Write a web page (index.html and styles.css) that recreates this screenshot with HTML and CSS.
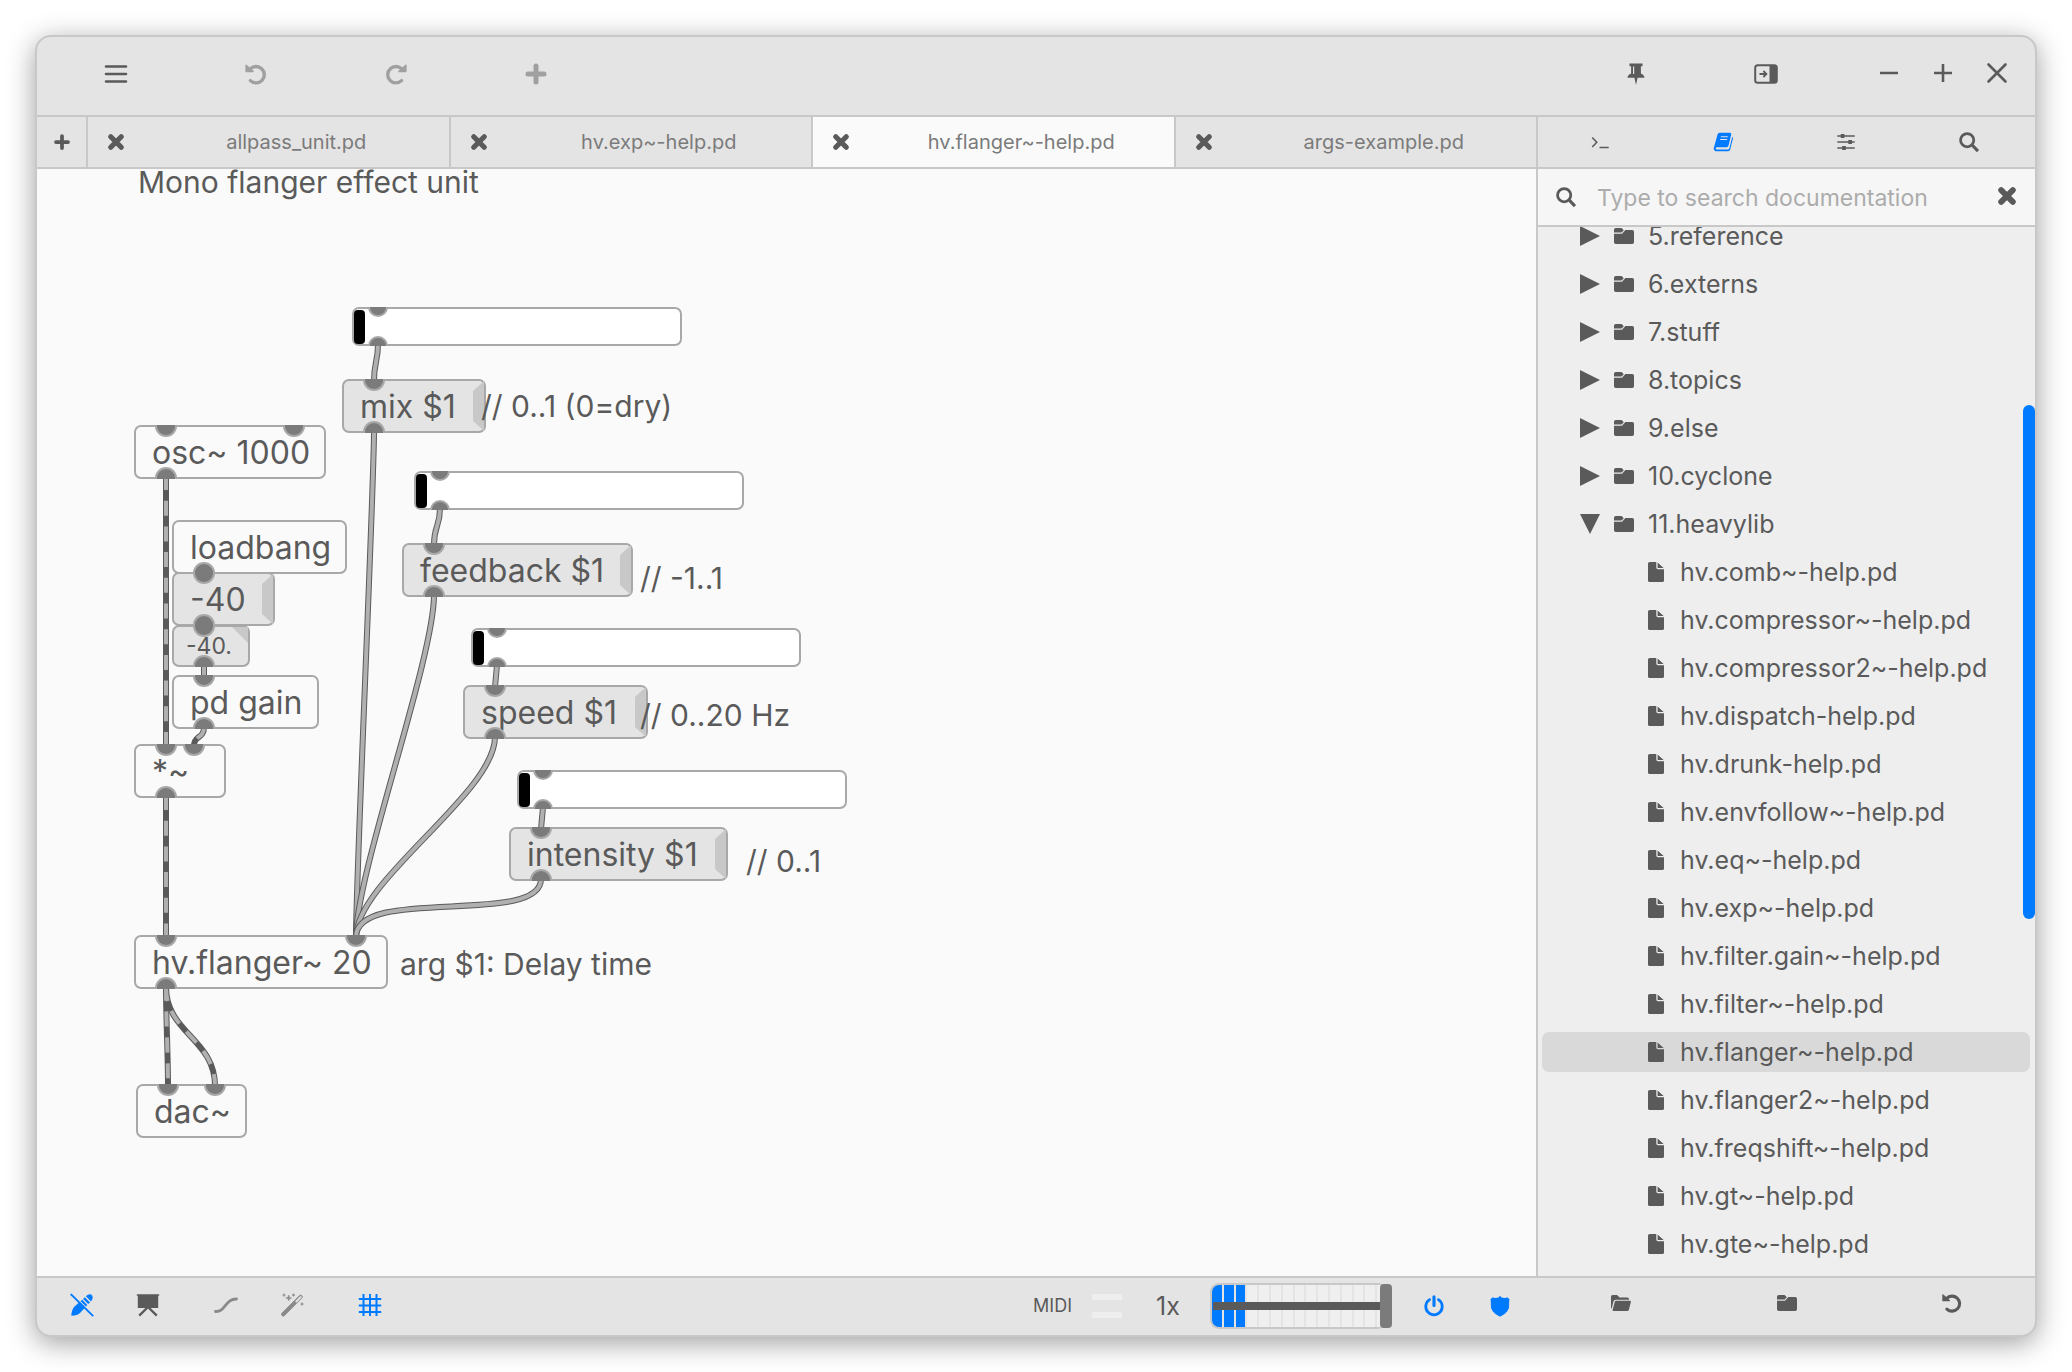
FILE: index.html
```html
<!DOCTYPE html>
<html lang="en">
<head>
<meta charset="utf-8">
<title>hv.flanger~-help.pd</title>
<link rel="stylesheet" href="styles.css">
</head>
<body>
<svg class="sprite" aria-hidden="true">
  <symbol id="i-menu" viewBox="0 0 24 24"><path d="M2 4.5h20M2 12h20M2 19.5h20" fill="none" stroke="currentColor" stroke-width="2.6" stroke-linecap="round"/></symbol>
  <symbol id="i-undo" viewBox="0 0 24 24"><path d="M6 7.2A8.2 8.2 0 1 1 6.4 18.6" fill="none" stroke="currentColor" stroke-width="3.4" stroke-linecap="round"/><path d="M1.4 3.2q0-1.4 1.2-.4l7 6.2q1 1-.4 1.2H2.4q-1 0-1-1z" fill="currentColor"/></symbol>
  <symbol id="i-redo" viewBox="0 0 24 24"><path d="M18 7.2A8.2 8.2 0 1 0 17.6 18.6" fill="none" stroke="currentColor" stroke-width="3.4" stroke-linecap="round"/><path d="M22.6 3.2q0-1.4-1.2-.4l-7 6.2q-1 1 .4 1.2h6.8q1 0 1-1z" fill="currentColor"/></symbol>
  <symbol id="i-plus" viewBox="0 0 24 24"><path d="M12 4v16M4 12h16" fill="none" stroke="currentColor" stroke-width="5" stroke-linecap="round"/></symbol>
  <symbol id="i-cross" viewBox="0 0 24 24"><path d="M5 5l14 14M19 5L5 19" fill="none" stroke="currentColor" stroke-width="7" stroke-linecap="round"/></symbol>
  <symbol id="i-pin" viewBox="0 0 24 24"><path d="M5.500 1.500h13v2.800h-1.600v7.200c2.200.8 3.400 2.200 3.600 4.300h-6.900L12 23l-1.600-7.200H3.500c.2-2.100 1.400-3.500 3.600-4.300V4.300H5.500z" fill="currentColor"/><path d="M9.600 4.500v7.500" stroke="#e4e4e4" stroke-width="1.200"/></symbol>
  <symbol id="i-panel" viewBox="0 0 24 24"><rect x="1.200" y="3.200" width="21.600" height="17.600" rx="2.500" fill="none" stroke="currentColor" stroke-width="2"/><path d="M15.500 3h5.500q2 0 2 2v14q0 2-2 2h-5.500z" fill="currentColor"/><path d="M5.500 12h6.500M9.400 9l3 3-3 3" fill="none" stroke="currentColor" stroke-width="1.800"/></symbol>
  <symbol id="i-minimise" viewBox="0 0 24 24"><path d="M3 12h18" stroke="currentColor" stroke-width="2.600"/></symbol>
  <symbol id="i-maximise" viewBox="0 0 24 24"><path d="M3 12h18M12 3v18" stroke="currentColor" stroke-width="2.600"/></symbol>
  <symbol id="i-close" viewBox="0 0 24 24"><path d="M3.500 3.500l17 17M20.500 3.500l-17 17" stroke="currentColor" stroke-width="2.600" stroke-linecap="round"/></symbol>
  <symbol id="i-console" viewBox="0 0 24 24"><path d="M3.500 7l5 5.200-5 5.200M11.500 18H21.500" fill="none" stroke="currentColor" stroke-width="1.700"/></symbol>
  <symbol id="i-book" viewBox="0 0 24 24"><path d="M8.200 2h11.300q1.900 0 1.500 1.900l-3 12.300q-.4 1.600-2 1.600H5.500q-1.400.1-1.500 1.300.1 1 1.300 1h11.900q1.400 0 1.800-1.400l3.100-12.300q1 .8.700 2l-3 12Q19.300 22 17.600 22H4.700Q1.900 21.700 1.900 18.800L6 3.700Q6.500 2 8.200 2z" fill="currentColor"/><path d="M9.600 6.200h7.600M8.900 9.200h7.600" stroke="#e4e4e4" stroke-width="1.100"/></symbol>
  <symbol id="i-sliders" viewBox="0 0 24 24"><path d="M2.500 5.500h19M2.500 12h19M2.500 18.500h19" stroke="currentColor" stroke-width="1.600"/><path d="M6.300 3.300h4v4.400h-4zM14.500 9.800h4v4.400h-4zM7.800 16.300h4v4.400h-4z" fill="currentColor"/></symbol>
  <symbol id="i-search" viewBox="0 0 24 24"><circle cx="10" cy="10" r="7.200" fill="none" stroke="currentColor" stroke-width="3"/><path d="M15.500 15.500l6.300 6.500" stroke="currentColor" stroke-width="3.400"/></symbol>
  <symbol id="i-folder" viewBox="0 0 20 16"><path d="M0 5V1.800Q0 0 1.800 0H7.600L9.800 2.200 7.600 4.400H0zM0 5.800H8L11.400 1.900h6.800Q20 1.900 20 3.700v10.500Q20 16 18.200 16H1.800Q0 16 0 14.200z" fill="currentColor"/></symbol>
  <symbol id="i-folder-open" viewBox="0 0 20 16"><path d="M0 12.500V1.600Q0 0 1.600 0H6L8.600 2.400h7.800Q18 2.400 18 4v.7H4.700Q3 4.700 2.500 6.200L.7 13.800q-.7-.3-.7-1.300zM1.600 14.900L3.800 6.700Q4.100 5.700 5.200 5.700H19q1.200 0 .9 1.100l-2 7.900Q17.500 16 16.200 16H2.500Q1.400 16 1.600 14.900z" fill="currentColor"/></symbol>
  <symbol id="i-file" viewBox="0 0 16 20"><path d="M1.600 0H8.300V5.600Q8.300 7.300 10 7.300H16V18.400Q16 20 14.400 20H1.600Q0 20 0 18.400V1.600Q0 0 1.600 0zM9.600.6L15.600 6.100H9.600z" fill="currentColor"/></symbol>
  <symbol id="i-right" viewBox="0 0 20 20"><path d="M0 0L20 10 0 20z" fill="currentColor"/></symbol>
  <symbol id="i-down" viewBox="0 0 20 20"><path d="M0 0H20L10 20z" fill="currentColor"/></symbol>
  <symbol id="i-pencil-off" viewBox="0 0 24 24"><path d="M1.300 22.700q.2-6 3.200-9.200L12.200 6.800 17.300 12 10.500 19.500Q7.500 22.700 1.300 22.700zM13.100 6l1.700-1.700 5.200 5.100L18.200 11.100zM15.900 3.300Q18.500.6 21.300 1.600 24.300 4.500 21 8.400z" fill="currentColor"/><path d="M2.400.9l20.800 20.800" stroke="#e4e4e4" stroke-width="1.300"/><path d="M1.300 1.600l21.400 21" stroke="currentColor" stroke-width="1.900" stroke-linecap="round"/></symbol>
  <symbol id="i-present" viewBox="0 0 24 24"><path d="M.8 1.300h22.400v1.400h-1V15H1.800V2.700h-1z" fill="currentColor"/><path d="M12 14L3.200 22.600M12 14l8.800 8.600" stroke="currentColor" stroke-width="2.400"/></symbol>
  <symbol id="i-curve" viewBox="0 0 24 24"><path d="M1.500 18.500C12 19 10.500 6 22.500 6" fill="none" stroke="currentColor" stroke-width="2.800" stroke-linecap="round"/></symbol>
  <symbol id="i-wand" viewBox="0 0 24 24"><path d="M1.900 20.300L19.600 2.600Q20.700 1.600 21.800 2.700 22.900 3.800 21.900 4.800L4.200 22.700Q3.200 23.600 2.100 22.600 1 21.300 1.900 20.300z" fill="currentColor" stroke="currentColor"/><path d="M15.600 8.300l4.600-4.700q.5-.4.900 0t0 .9L16.500 9.200z" fill="#e4e4e4" stroke="#e4e4e4"/><path d="M8.700 2l.8 2.200 2.200.8-2.200.8-.8 2.200-.8-2.200L5.700 5l2.200-.8zM4 .6l.5 1 1 .5-1 .5-.5 1-.5-1-1-.5 1-.5zM13.500.6l.5 1 1 .5-1 .5-.5 1-.5-1-1-.5 1-.5zM22 9.500l.5 1 1 .5-1 .5-.5 1-.5-1-1-.5 1-.5z" fill="currentColor" stroke="currentColor" stroke-width=".5"/></symbol>
  <symbol id="i-grid" viewBox="0 0 24 24"><path d="M5.500 1v22M12 1v22M18.500 1v22M.8 6h22.400M.8 12.500h22.400M.8 19h22.400" stroke="currentColor" stroke-width="2"/></symbol>
  <symbol id="i-power" viewBox="0 0 24 24"><path d="M7.200 5A9 9 0 1 0 16.800 5" fill="none" stroke="currentColor" stroke-width="3" stroke-linecap="round"/><path d="M12 2v9.500" stroke="currentColor" stroke-width="3.400" stroke-linecap="round"/></symbol>
  <symbol id="i-shield" viewBox="0 0 24 24"><path d="M12 .8Q13 3.400 17 3.300q2 0 3-.9L22.500 4.800Q21.700 6 22 9.500 23 19 12 23.600 1 19 2 9.500 2.300 6 1.500 4.800L4 2.400q1 .9 3 .9 4 .1 5-2.500z" fill="currentColor"/></symbol>
</svg>

<div class="window">
  <header class="titlebar">
    <div class="tools">
      <button class="tool" aria-label="Menu"><svg><use href="#i-menu"/></svg></button>
      <button class="tool muted" aria-label="Undo"><svg><use href="#i-undo"/></svg></button>
      <button class="tool muted" aria-label="Redo"><svg><use href="#i-redo"/></svg></button>
      <button class="tool muted" aria-label="Add object"><svg><use href="#i-plus"/></svg></button>
    </div>
    <div class="tools tools-end">
      <button class="tool narrow" aria-label="Pin sidebar"><svg><use href="#i-pin"/></svg></button>
      <button class="tool narrow" aria-label="Hide sidebar"><svg><use href="#i-panel"/></svg></button>
    </div>
    <div class="window-controls">
      <button aria-label="Minimise"><svg><use href="#i-minimise"/></svg></button>
      <button aria-label="Maximise"><svg><use href="#i-maximise"/></svg></button>
      <button aria-label="Close"><svg><use href="#i-close"/></svg></button>
    </div>
  </header>

  <div class="body">
    <main class="editor">
      <nav class="tabs" aria-label="Open patches">
        <button class="new-tab" aria-label="New tab"><svg><use href="#i-plus"/></svg></button>
        <div class="tab"><button class="tab-close" aria-label="Close allpass_unit.pd"><svg><use href="#i-cross"/></svg></button><a class="tab-name" href="#">allpass_unit.pd</a></div>
        <div class="tab"><button class="tab-close" aria-label="Close hv.exp~-help.pd"><svg><use href="#i-cross"/></svg></button><a class="tab-name" href="#">hv.exp~-help.pd</a></div>
        <div class="tab current"><button class="tab-close" aria-label="Close hv.flanger~-help.pd"><svg><use href="#i-cross"/></svg></button><a class="tab-name" href="#">hv.flanger~-help.pd</a></div>
        <div class="tab"><button class="tab-close" aria-label="Close args-example.pd"><svg><use href="#i-cross"/></svg></button><a class="tab-name" href="#">args-example.pd</a></div>
      </nav>

      <div class="canvas">
        <div class="patch">
          <svg class="cables" aria-hidden="true">
            <defs>
              <path id="c1" d="M128 307V577"/>
              <path id="c2" d="M128 627V768"/>
              <path id="c3" d="M128 818C128 850 130 885 130 917"/>
              <path id="c4" d="M128 818C128 864 177 870 177 917"/>
              <path id="c5" d="M166 496V508"/>
              <path id="c6" d="M166 558C166 570 156 566 156 577"/>
              <path id="c7" d="M340 175C340 193 336 193 336 212"/>
              <path id="c8" d="M336 262C336 322 318 706 318 768"/>
              <path id="c9" d="M402 339C402 358 396 356 396 376"/>
              <path id="c10" d="M396 426C396 490 318 704 318 768"/>
              <path id="c11" d="M459 496L457 518"/>
              <path id="c12" d="M457 568C457 624 318 712 318 768"/>
              <path id="c13" d="M505 638L503 660"/>
              <path id="c14" d="M503 710C503 758 318 716 318 768"/>
            </defs>
            <g class="cable"><use href="#c5"/><use href="#c7"/><use href="#c9"/><use href="#c11"/><use href="#c13"/></g>
            <g class="cable-core"><use href="#c5"/><use href="#c7"/><use href="#c9"/><use href="#c11"/><use href="#c13"/></g>
            <use class="cable" href="#c8"/><use class="cable-core" href="#c8"/>
            <use class="cable" href="#c10"/><use class="cable-core" href="#c10"/>
            <use class="cable" href="#c12"/><use class="cable-core" href="#c12"/>
            <use class="cable" href="#c14"/><use class="cable-core" href="#c14"/>
            <g class="cable"><use href="#c1"/><use href="#c2"/><use href="#c3"/><use href="#c4"/><use href="#c6"/></g>
            <g class="cable-core signal"><use href="#c1"/><use href="#c2"/><use href="#c3"/><use href="#c4"/><use href="#c6"/></g>
          </svg>

          <div class="node at-mix-slider slider"><input type="range" min="0" max="100" value="0" aria-label="Mix"><i class="in"></i><i class="out"></i></div>
          <div class="node at-feedback-slider slider"><input type="range" min="0" max="100" value="0" aria-label="Feedback"><i class="in"></i><i class="out"></i></div>
          <div class="node at-speed-slider slider"><input type="range" min="0" max="100" value="0" aria-label="Speed"><i class="in"></i><i class="out"></i></div>
          <div class="node at-intensity-slider slider"><input type="range" min="0" max="100" value="0" aria-label="Intensity"><i class="in"></i><i class="out"></i></div>

          <button class="node message at-mix">mix $1<i class="in"></i><i class="out"></i></button>
          <button class="node message at-feedback">feedback $1<i class="in"></i><i class="out"></i></button>
          <button class="node message at-speed">speed $1<i class="in"></i><i class="out"></i></button>
          <button class="node message at-intensity">intensity $1<i class="in"></i><i class="out"></i></button>

          <div class="node at-osc">osc~ 1000<i class="in"></i><i class="in last"></i><i class="out"></i></div>
          <div class="node at-loadbang">loadbang<i class="out"></i></div>
          <button class="node message at-minus">-40<i class="in"></i><i class="out"></i></button>
          <div class="node number at-number"><input type="text" value="-40." aria-label="Gain in dB"><i class="in"></i><i class="out"></i></div>
          <div class="node at-gain">pd gain<i class="in"></i><i class="out"></i></div>
          <div class="node at-times">*~<i class="in"></i><i class="in last"></i><i class="out"></i></div>
          <div class="node at-flanger">hv.flanger~ 20<i class="in"></i><i class="in last"></i><i class="out"></i></div>
          <div class="node at-dac">dac~<i class="in"></i><i class="in last"></i></div>

          <p class="comment at-title">Mono flanger effect unit</p>
          <p class="comment at-mix-note">// 0..1 (0=dry)</p>
          <p class="comment at-feedback-note">// -1..1</p>
          <p class="comment at-speed-note">// 0..20 Hz</p>
          <p class="comment at-intensity-note">// 0..1</p>
          <p class="comment at-arg-note">arg $1: Delay time</p>
        </div>
      </div>
    </main>

    <aside class="sidebar">
      <nav class="panels" aria-label="Panels">
        <button aria-label="Console"><svg><use href="#i-console"/></svg></button>
        <button class="active" aria-label="Documentation"><svg><use href="#i-book"/></svg></button>
        <button aria-label="Automation"><svg><use href="#i-sliders"/></svg></button>
        <button aria-label="Search"><svg><use href="#i-search"/></svg></button>
      </nav>
      <div class="search">
        <svg><use href="#i-search"/></svg>
        <input type="text" placeholder="Type to search documentation" aria-label="Search documentation">
        <button aria-label="Clear search"><svg><use href="#i-cross"/></svg></button>
      </div>
      <div class="tree-view">
        <ul class="tree">
          <li><button class="row"><svg class="arrow"><use href="#i-right"/></svg><svg class="folder"><use href="#i-folder"/></svg>5.reference</button></li>
          <li><button class="row"><svg class="arrow"><use href="#i-right"/></svg><svg class="folder"><use href="#i-folder"/></svg>6.externs</button></li>
          <li><button class="row"><svg class="arrow"><use href="#i-right"/></svg><svg class="folder"><use href="#i-folder"/></svg>7.stuff</button></li>
          <li><button class="row"><svg class="arrow"><use href="#i-right"/></svg><svg class="folder"><use href="#i-folder"/></svg>8.topics</button></li>
          <li><button class="row"><svg class="arrow"><use href="#i-right"/></svg><svg class="folder"><use href="#i-folder"/></svg>9.else</button></li>
          <li><button class="row"><svg class="arrow"><use href="#i-right"/></svg><svg class="folder"><use href="#i-folder"/></svg>10.cyclone</button></li>
          <li><button class="row" aria-expanded="true"><svg class="arrow"><use href="#i-down"/></svg><svg class="folder"><use href="#i-folder"/></svg>11.heavylib</button>
            <ul>
              <li><a class="row child" href="#"><svg class="file"><use href="#i-file"/></svg>hv.comb~-help.pd</a></li>
              <li><a class="row child" href="#"><svg class="file"><use href="#i-file"/></svg>hv.compressor~-help.pd</a></li>
              <li><a class="row child" href="#"><svg class="file"><use href="#i-file"/></svg>hv.compressor2~-help.pd</a></li>
              <li><a class="row child" href="#"><svg class="file"><use href="#i-file"/></svg>hv.dispatch-help.pd</a></li>
              <li><a class="row child" href="#"><svg class="file"><use href="#i-file"/></svg>hv.drunk-help.pd</a></li>
              <li><a class="row child" href="#"><svg class="file"><use href="#i-file"/></svg>hv.envfollow~-help.pd</a></li>
              <li><a class="row child" href="#"><svg class="file"><use href="#i-file"/></svg>hv.eq~-help.pd</a></li>
              <li><a class="row child" href="#"><svg class="file"><use href="#i-file"/></svg>hv.exp~-help.pd</a></li>
              <li><a class="row child" href="#"><svg class="file"><use href="#i-file"/></svg>hv.filter.gain~-help.pd</a></li>
              <li><a class="row child" href="#"><svg class="file"><use href="#i-file"/></svg>hv.filter~-help.pd</a></li>
              <li><a class="row child selected" href="#"><svg class="file"><use href="#i-file"/></svg>hv.flanger~-help.pd</a></li>
              <li><a class="row child" href="#"><svg class="file"><use href="#i-file"/></svg>hv.flanger2~-help.pd</a></li>
              <li><a class="row child" href="#"><svg class="file"><use href="#i-file"/></svg>hv.freqshift~-help.pd</a></li>
              <li><a class="row child" href="#"><svg class="file"><use href="#i-file"/></svg>hv.gt~-help.pd</a></li>
              <li><a class="row child" href="#"><svg class="file"><use href="#i-file"/></svg>hv.gte~-help.pd</a></li>
            </ul>
          </li>
        </ul>
        <div class="scrollbar"></div>
      </div>
    </aside>
  </div>

  <footer class="statusbar">
    <div class="status-main">
      <div class="modes">
        <button class="active" aria-label="Edit mode"><svg><use href="#i-pencil-off"/></svg></button>
        <button aria-label="Presentation mode"><svg><use href="#i-present"/></svg></button>
        <button class="dim" aria-label="Curved connection"><svg><use href="#i-curve"/></svg></button>
        <button class="dim" aria-label="Tidy connection"><svg><use href="#i-wand"/></svg></button>
        <button class="active" aria-label="Show grid"><svg><use href="#i-grid"/></svg></button>
      </div>
      <div class="audio">
        <span class="midi">MIDI</span>
        <span class="midi-lights"><i></i><i></i></span>
        <button class="oversample">1x</button>
        <div class="meter">
          <div class="cells"><i class="on"></i><i class="on"></i><i class="on"></i><i></i><i></i><i></i><i></i><i></i><i></i><i></i><i></i><i></i><i></i><i></i><i></i></div>
          <input type="range" min="0" max="100" value="100" aria-label="Volume">
        </div>
        <button class="active switch" aria-label="Audio power"><svg><use href="#i-power"/></svg></button>
        <button class="active switch" aria-label="Protected mode"><svg><use href="#i-shield"/></svg></button>
      </div>
    </div>
    <div class="status-side">
      <button aria-label="Open folder"><svg class="folder"><use href="#i-folder-open"/></svg></button>
      <button aria-label="Show folder"><svg class="folder"><use href="#i-folder"/></svg></button>
      <button aria-label="Reset folder"><svg class="reset"><use href="#i-undo"/></svg></button>
    </div>
  </footer>
</div>
</body>
</html>
```
FILE: styles.css
```css
:root {
  --line: #c8c8c8;
  --bar: #e4e4e4;
  --canvas: #fafafa;
  --text: #5a5a5a;
  --soft: #7b7b7b;
  --outline: #a8a8a8;
  --blue: #007aff;
}

* {
  box-sizing: border-box;
}

body {
  display: flex;
  flex-direction: column;
  height: 100vh;
  margin: 0;
  padding: 35px;
  background: #fff;
  color: var(--text);
  font: 25px/32px Inter, "Liberation Sans", sans-serif;
}

button,
input {
  margin: 0;
  padding: 0;
  border: 0;
  background: none;
  color: inherit;
  font: inherit;
}

a {
  color: inherit;
  text-decoration: none;
}

ul {
  margin: 0;
  padding: 0;
  list-style: none;
}

button {
  display: flex;
  align-items: center;
  justify-content: center;
}

svg {
  flex: none;
  width: 24px;
  height: 24px;
}

.sprite {
  display: none;
}

.active {
  color: var(--blue);
}

.window {
  display: flex;
  flex: 1;
  flex-direction: column;
  min-height: 0;
  overflow: hidden;
  border: 2px solid var(--line);
  border-radius: 16px;
  background: var(--bar);
  box-shadow: 0 6px 28px rgba(0, 0, 0, 0.38);
}

/* Title bar */

.titlebar {
  display: flex;
  align-items: center;
  height: 80px;
  padding: 0 11px 4px 9px;
  border-bottom: 2px solid var(--line);
}

.tools {
  display: flex;
}

.tools-end {
  margin: 0 31px 0 auto;
}

.tool {
  width: 140px;
  height: 48px;
}

.tool.narrow {
  width: 130px;
}

.muted {
  color: #a0a0a0;
}

.window-controls {
  display: flex;
  padding-bottom: 2px;
}

.window-controls button {
  width: 54px;
  height: 48px;
}

/* Main area */

.body {
  display: flex;
  flex: 1;
  min-height: 0;
}

.editor {
  display: flex;
  flex: 1;
  flex-direction: column;
  min-width: 0;
}

.tabs {
  display: flex;
  height: 52px;
  border-bottom: 2px solid var(--line);
}

.new-tab {
  width: 49px;
}

.new-tab svg,
.tab-close svg {
  width: 18px;
  height: 18px;
}

.tab {
  display: flex;
  flex: 1;
  align-items: center;
  border-left: 2px solid var(--line);
}

.tab.current {
  background: var(--canvas);
}

.tab-close {
  width: 56px;
  height: 48px;
}

.tab-name {
  flex: 1;
  color: var(--soft);
  font-size: 20px;
  text-align: center;
}

.canvas {
  position: relative;
  flex: 1;
  overflow: hidden;
  background: var(--canvas);
}

.patch {
  position: absolute;
  inset: 0 0 0 1px;
}

/* Patch cables */

.cables {
  position: absolute;
  inset: 0;
  width: 100%;
  height: 100%;
}

.cable {
  fill: none;
  stroke: var(--text);
  stroke-width: 6px;
}

.cable-core {
  fill: none;
  stroke: #b0b0b0;
  stroke-width: 4px;
}

.signal {
  stroke-dasharray: 15 10.7;
  stroke-dashoffset: 1;
}

/* Patch objects */

.node {
  position: absolute;
  display: block;
  height: 54px;
  padding: 0 16px;
  border: 2px solid var(--outline);
  border-radius: 7px;
  background: var(--canvas);
  font-size: 32px;
  line-height: 52px;
  text-align: left;
  white-space: nowrap;
}

.node .in,
.node .out {
  position: absolute;
  left: 19px;
  width: 22px;
  height: 12px;
  border: 2px solid var(--outline);
  background: var(--soft);
}

.node .in {
  top: -2px;
  border-top: 0;
  border-radius: 0 0 11px 11px;
}

.node .out {
  bottom: -2px;
  border-bottom: 0;
  border-radius: 11px 11px 0 0;
}

.node .last {
  right: 19px;
  left: auto;
}

.message {
  background: #e4e4e4;
}

.message::after {
  position: absolute;
  top: 0;
  right: 0;
  width: 11px;
  height: 50px;
  background: #c8c8c8;
  clip-path: polygon(100% 0, 0 20%, 0 80%, 100% 100%);
  content: "";
}

.number {
  height: 42px;
  padding: 0 12px;
  background: #e4e4e4;
  font-size: 23px;
  line-height: 38px;
}

.number input {
  display: block;
  width: 100%;
  height: 38px;
}

.number::after {
  position: absolute;
  top: 0;
  right: 0;
  width: 16px;
  height: 16px;
  background: #c8c8c8;
  clip-path: polygon(0 0, 100% 0, 100% 100%);
  content: "";
}

.slider {
  width: 330px;
  height: 39px;
  padding: 0;
  background: #fff;
}

.slider input {
  display: block;
  width: 100%;
  height: 35px;
  appearance: none;
}

.slider input::-webkit-slider-thumb {
  width: 11px;
  height: 34px;
  border-radius: 4px;
  background: #000;
  appearance: none;
}

.slider .in,
.slider .out {
  left: 14px;
  width: 20px;
  height: 10px;
}

.at-mix-slider { left: 314px; top: 138px; }
.at-feedback-slider { left: 376px; top: 302px; }
.at-speed-slider { left: 433px; top: 459px; }
.at-intensity-slider { left: 479px; top: 601px; }
.at-mix { left: 304px; top: 210px; width: 144px; }
.at-feedback { left: 364px; top: 374px; width: 231px; }
.at-speed { left: 425px; top: 516px; width: 185px; }
.at-intensity { left: 471px; top: 658px; width: 219px; }
.at-osc { left: 96px; top: 256px; width: 192px; }
.at-loadbang { left: 134px; top: 351px; width: 175px; }
.at-minus { left: 134px; top: 403px; width: 103px; }
.at-number { left: 134px; top: 456px; width: 78px; }
.at-gain { left: 134px; top: 506px; width: 147px; }
.at-times { left: 96px; top: 575px; width: 92px; }
.at-flanger { left: 96px; top: 766px; width: 254px; }
.at-dac { left: 98px; top: 915px; width: 111px; }

.comment {
  position: absolute;
  margin: 0;
  font-size: 30px;
  line-height: 26px;
  white-space: nowrap;
}

.at-title { left: 100px; top: 0; }
.at-mix-note { left: 443px; top: 224px; }
.at-feedback-note { left: 602px; top: 396px; }
.at-speed-note { left: 602px; top: 533px; }
.at-intensity-note { left: 708px; top: 679px; }
.at-arg-note { left: 362px; top: 782px; }

/* Sidebar */

.sidebar {
  display: flex;
  flex-direction: column;
  width: 499px;
  border-left: 2px solid var(--line);
  background: #eee;
}

.panels {
  display: flex;
  flex: none;
  height: 52px;
  padding-right: 4px;
  border-bottom: 2px solid var(--line);
  background: var(--bar);
}

.panels button {
  flex: 1;
}

.panels svg {
  width: 22px;
  height: 22px;
}

.search {
  display: flex;
  flex: none;
  align-items: center;
  height: 58px;
  padding: 0 18px 0 17px;
  border-bottom: 2px solid var(--line);
  background: #f6f6f6;
}

.search svg {
  width: 22px;
  height: 22px;
}

.search input {
  flex: 1;
  height: 34px;
  min-width: 0;
  margin-left: 20px;
  padding-top: 2px;
  font-size: 23px;
}

.search input::placeholder {
  color: #acacac;
  opacity: 1;
}

.search button {
  height: 34px;
  padding-bottom: 2px;
}

.search button svg {
  width: 20px;
  height: 20px;
}

.tree-view {
  position: relative;
  flex: 1;
  min-height: 0;
  overflow: hidden;
}

.tree {
  margin-top: -15px;
  padding: 0 5px 0 4px;
}

.row {
  display: flex;
  align-items: center;
  justify-content: flex-start;
  width: 100%;
  height: 40px;
  margin: 4px 0;
  padding-left: 38px;
  border-radius: 7px;
}

.tree li {
  display: flow-root;
}

.row.child {
  padding-left: 106px;
}

.row.selected {
  background: #d9d9d9;
}

.arrow {
  width: 20px;
  height: 20px;
  margin-right: 14px;
}

.folder {
  width: 20px;
  height: 16px;
}

.row .folder {
  margin-right: 14px;
}

.file {
  width: 16px;
  height: 20px;
  margin-right: 16px;
}

.scrollbar {
  position: absolute;
  top: 17%;
  right: 0;
  width: 12px;
  height: 49%;
  border-radius: 6px;
  background: var(--blue);
}

/* Status bar */

.statusbar {
  display: flex;
  height: 59px;
  border-top: 2px solid var(--line);
}

.status-main {
  display: flex;
  flex: 1;
  align-items: center;
  justify-content: space-between;
  padding: 0 5px 1px 12px;
}

.modes,
.audio {
  display: flex;
  align-items: center;
}

.modes {
  padding-bottom: 2px;
}

.modes button {
  width: 66px;
  height: 48px;
}

.modes button + button:nth-child(odd) {
  margin-left: 12px;
}

.dim {
  color: #8a8a8a;
}

.midi {
  margin-right: 20px;
  font-size: 18px;
}

.midi-lights {
  display: grid;
  gap: 12px;
  width: 30px;
}

.midi-lights i {
  height: 6px;
  background: #eee;
}

.oversample {
  width: 40px;
  height: 48px;
  margin: 0 22px 0 26px;
}

.meter {
  display: grid;
  width: 182px;
  height: 46px;
  margin-right: 9px;
}

.cells,
.meter input {
  grid-area: 1 / 1;
}

.cells {
  display: grid;
  grid-template-columns: repeat(15, 1fr);
  gap: 2px;
  margin-right: 5px;
  overflow: hidden;
  border: 2px solid var(--line);
  border-right: 0;
  border-radius: 9px;
}

.cells i {
  background: #efefef;
}

.cells .on {
  background: var(--blue);
}

.meter input {
  width: 100%;
  height: 46px;
  background: linear-gradient(var(--text), var(--text)) 3px 50% / 170px 8px no-repeat;
  appearance: none;
}

.meter input::-webkit-slider-thumb {
  width: 12px;
  height: 44px;
  border-radius: 4px;
  background: var(--soft);
  appearance: none;
}

.switch {
  width: 66px;
  height: 48px;
}

.switch svg {
  width: 22px;
  height: 22px;
}

.status-side {
  display: flex;
  width: 497px;
  padding-bottom: 8px;
}

.status-side button {
  flex: 1;
}

.reset {
  width: 22px;
  height: 22px;
}
```
